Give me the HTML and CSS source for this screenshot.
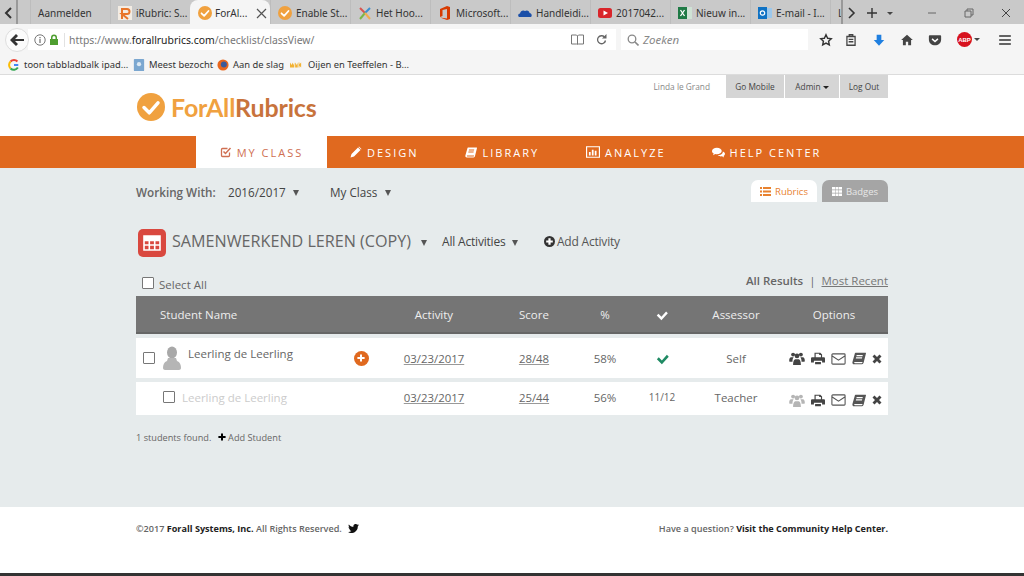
FILE: index.html
```html
<!DOCTYPE html>
<html lang="en">
<head>
  <meta charset="UTF-8" />
  <title>ForAllRubrics - Class View</title>
  <link rel="stylesheet" href="styles.css">
</head>
<body>
  <svg class="defs" width="0" height="0" aria-hidden="true">
    <symbol id="i-check" viewBox="0 0 24 24"><path d="M3 13l3-3 5 5L19 6l3 3-11 12z"/></symbol>
    <symbol id="i-people" viewBox="0 0 24 20"><circle cx="6" cy="4" r="3"/><circle cx="18" cy="4" r="3"/><circle cx="12" cy="6" r="3.6"/><path d="M0 13c0-3 1-5 3-5h4c-1 1-2 3-2 7H1c-.6 0-1-1-1-2zM24 13c0-3-1-5-3-5h-4c1 1 2 3 2 7h4c.6 0 1-1 1-2zM6 20c0-5 1-9 4-9h4c3 0 4 4 4 9z"/></symbol>
    <symbol id="i-print" viewBox="0 0 24 22"><path d="M6 1h10l3 3v5h-2V5h-3V3H8v6H6zM2 9h20c1 0 2 1 2 2v7h-5v-3H5v3H0v-7c0-1 1-2 2-2zM7 17h10v4H7z"/></symbol>
    <symbol id="i-mail" viewBox="0 0 24 20"><path fill="none" stroke="currentColor" stroke-width="1.8" d="M2.5 1.5h19a1.500 1.500 0 0 1 1.500 1.500v14a1.500 1.500 0 0 1-1.500 1.500h-19A1.500 1.500 0 0 1 1 17V3a1.500 1.500 0 0 1 1.500-1.500zM1.500 5l10.500 7 10.500-7"/></symbol>
    <symbol id="i-book" viewBox="0 0 24 22"><path d="M6 1h17c1 0 1 1 1 1l-4 16c-.3 1-1 3-3 3H4c-3 0-4-2-3-5L5 2c0-.5.500-1 1-1zM8 5l-.5 2H18l.5-2zM7 9l-.5 2H17l.5-2zM4 17c-.5 1 0 2 1 2h12c.5 0 1-.5 1-2z"/></symbol>
    <symbol id="i-close" viewBox="0 0 20 20"><path d="M5 1l5 5 5-5 4 4-5 5 5 5-4 4-5-5-5 5-4-4 5-5-5-5z"/></symbol>
    <symbol id="i-plus" viewBox="0 0 20 20"><path d="M7.500 1h5v6.500H19v5h-6.500V19h-5v-6.500H1v-5h6.500z"/></symbol>
    <symbol id="i-logo-check" viewBox="0 0 24 24"><path fill="none" stroke="#fff" stroke-width="3" stroke-linecap="round" stroke-linejoin="round" d="M6 12.500l4.500 4.500L18 8.500"/></symbol>
  </svg>

  <!-- browser chrome -->
  <div class="tabstrip">
    <span class="strip-arrow">
      <svg width="9" height="12" viewBox="0 0 9 12"><path fill="none" stroke="#333" stroke-width="2" d="M7 1L2 6l5 5"/></svg>
    </span>
    <span class="strip-stub"></span>
    <div class="tab">Aanmelden</div>
    <div class="tab">
      <svg class="favicon" viewBox="0 0 14 14"><rect width="14" height="14" fill="#f3ece3"/><path fill="none" stroke="#e8752a" stroke-width="2" d="M4 13V3h5a2.500 2.500 0 0 1 0 5H4l6 5"/></svg>
      <span>iRubric: S...</span>
    </div>
    <div class="tab tab-active">
      <svg class="favicon" viewBox="0 0 24 24"><circle cx="12" cy="12" r="12" fill="#f0a13f"/><use href="#i-logo-check"/></svg>
      <span>ForAl...</span>
      <svg class="tab-x" width="11" height="11" viewBox="0 0 11 11"><path fill="none" stroke="#555" stroke-width="1.200" d="M1 1l9 9M10 1l-9 9"/></svg>
    </div>
    <div class="tab">
      <svg class="favicon" viewBox="0 0 24 24"><circle cx="12" cy="12" r="12" fill="#f0a13f"/><use href="#i-logo-check"/></svg>
      <span>Enable St...</span>
    </div>
    <div class="tab">
      <svg class="favicon" viewBox="0 0 14 14"><path fill="none" stroke="#d9534f" stroke-width="2" d="M2 2l5 5"/><path fill="none" stroke="#3b8fd0" stroke-width="2" d="M12 2L7 7"/><path fill="none" stroke="#7ab648" stroke-width="2" d="M7 7l-5 6"/><path fill="none" stroke="#f0ad4e" stroke-width="2" d="M7 7l5 6"/></svg>
      <span>Het Hoo...</span>
    </div>
    <div class="tab">
      <svg class="favicon" viewBox="0 0 14 14"><path fill="#d83b01" d="M2 3l7-3 3 1v12l-3 1-7-2.500 7 1V3L4.500 4v6L2 11z"/></svg>
      <span>Microsoft...</span>
    </div>
    <div class="tab">
      <svg class="favicon" viewBox="0 0 14 14"><path fill="#1b4fa8" d="M1 11c-1.500-1-.8-3.500 1-3.500C2.500 5 5 3.500 7 5c2-1.500 4.500 0 4.500 2 2 0 3 3 1.500 4z"/></svg>
      <span>Handleidi...</span>
    </div>
    <div class="tab">
      <svg class="favicon" viewBox="0 0 14 14"><rect y="2" width="14" height="10" rx="2.500" fill="#d9252a"/><path fill="#fff" d="M5.500 4.500v5L10 7z"/></svg>
      <span>2017042...</span>
    </div>
    <div class="tab">
      <svg class="favicon" viewBox="0 0 14 14"><rect x="3" y="1" width="11" height="12" fill="#cfe3d5"/><rect y="1" width="9" height="12" fill="#1f7a45"/><path stroke="#fff" stroke-width="1.300" d="M2.500 4l4 6M6.500 4l-4 6"/></svg>
      <span>Nieuw in...</span>
    </div>
    <div class="tab">
      <svg class="favicon" viewBox="0 0 14 14"><rect x="4" y="2" width="10" height="10" fill="#9cc8ec"/><rect y="1" width="9" height="12" fill="#0f72c4"/><circle cx="4.500" cy="7" r="2.200" fill="none" stroke="#fff" stroke-width="1.200"/></svg>
      <span>E-mail - I...</span>
    </div>
    <div class="tab tab-cut">L</div>
    <div class="strip-controls">
      <svg class="strip-next" width="9" height="12" viewBox="0 0 9 12"><path fill="none" stroke="#333" stroke-width="1.600" d="M2 1l5 5-5 5"/></svg>
      <svg class="strip-new" width="12" height="12" viewBox="0 0 12 12"><path stroke="#333" stroke-width="1.400" d="M6 1v10M1 6h10"/></svg>
      <span class="mini-caret"></span>
    </div>
    <div class="win-controls">
      <svg width="10" height="10" viewBox="0 0 10 10"><path stroke="#666" d="M1 5h8"/></svg>
      <svg width="10" height="10" viewBox="0 0 10 10"><path fill="none" stroke="#666" d="M1 3h6v6H1zM3 3V1h6v6H7"/></svg>
      <svg width="10" height="10" viewBox="0 0 10 10"><path stroke="#444" d="M1 1l8 8M9 1L1 9"/></svg>
    </div>
  </div>

  <div class="toolbar">
    <span class="back-btn">
      <svg width="14" height="12" viewBox="0 0 14 12"><path fill="#333" d="M6 0l2 2-3 3h9v2H5l3 3-2 2-6-6z"/></svg>
    </span>
    <div class="urlbar">
      <svg class="url-info" width="12" height="12" viewBox="0 0 12 12"><circle cx="6" cy="6" r="5.200" fill="none" stroke="#777"/><path stroke="#777" stroke-width="1.300" d="M6 5v4M6 3v1.200"/></svg>
      <svg class="url-lock" width="10" height="11" viewBox="0 0 10 11"><path fill="#4f9e30" d="M1 5h1V3.500a3 3 0 0 1 6 0V5h1v6H1zM3.500 5h3V3.500a1.500 1.500 0 0 0-3 0z"/></svg>
      <span class="url-text">https://www.<b>forallrubrics.com</b>/checklist/classView/</span>
      <svg class="url-reader" width="13" height="11" viewBox="0 0 13 11"><path fill="none" stroke="#777" d="M.5 1h5l1 1 1-1h5v9h-5l-1 .5-1-.5h-5zM6.500 2v8"/></svg>
      <svg class="url-reload" width="11" height="11" viewBox="0 0 11 11"><path fill="none" stroke="#666" stroke-width="1.300" d="M9.500 6.500A4 4 0 1 1 8.500 3"/><path fill="#666" d="M10.500 0v4.500H6z"/></svg>
    </div>
    <div class="searchbar">
      <svg width="12" height="12" viewBox="0 0 12 12"><circle cx="5" cy="5" r="3.800" fill="none" stroke="#888" stroke-width="1.300"/><path stroke="#888" stroke-width="1.600" d="M8 8l3.500 3.500"/></svg>
      <span>Zoeken</span>
    </div>
    <div class="tools">
      <svg class="tool tool-star" viewBox="0 0 24 24"><path fill="none" stroke="#333" stroke-width="2.400" d="M12 3l2.800 6 6.200.7-4.600 4.300 1.300 6.500L12 17.200l-5.700 3.300 1.300-6.500L3 9.700 9.200 9z"/></svg>
      <svg class="tool" viewBox="0 0 24 24"><path fill="none" stroke="#444" stroke-width="2.200" d="M5 6h14v15H5zM9 6V3h6v3M8 11h8M8 15h8"/></svg>
      <svg class="tool" viewBox="0 0 24 24"><path fill="#1f7fe0" d="M8 3h8v9h5l-9 10-9-10h5z"/></svg>
      <svg class="tool" viewBox="0 0 24 24"><path fill="#444" d="M12 3l10 9h-3v9h-5v-6h-4v6H5v-9H2z"/></svg>
      <svg class="tool tool-pocket" viewBox="0 0 24 24"><path fill="#444" d="M3 4h18a1.500 1.500 0 0 1 1.500 1.500V11c0 6-5 10-10.500 10S1.500 17 1.500 11V5.500A1.500 1.500 0 0 1 3 4z"/><path fill="none" stroke="#fff" stroke-width="2.600" d="M7 10l5 4.500 5-4.500"/></svg>
      <span class="abp">ABP</span>
      <span class="mini-caret"></span>
      <svg class="tool tool-menu" viewBox="0 0 24 24"><path stroke="#333" stroke-width="2.600" d="M2 5h20M2 12h20M2 19h20"/></svg>
    </div>
  </div>

  <div class="bookmarks">
    <span class="bookmark bm-toon">
      <svg class="favicon" viewBox="0 0 14 14"><path fill="none" stroke="#4285f4" stroke-width="2.400" d="M12 7H7"/><path fill="none" stroke="#ea4335" stroke-width="2.400" d="M11 3a5.500 5.500 0 0 0-8 0"/><path fill="none" stroke="#fbbc05" stroke-width="2.400" d="M3 3a5.500 5.500 0 0 0 0 8"/><path fill="none" stroke="#34a853" stroke-width="2.400" d="M3 11a5.500 5.500 0 0 0 8.500-1"/></svg>
      toon tabbladbalk ipad...
    </span>
    <span class="bookmark bm-meest">
      <svg class="favicon" viewBox="0 0 14 14"><rect x="1" y="0" width="12" height="14" rx="1" fill="#7ba7d0"/><circle cx="7" cy="6" r="2.500" fill="#dbe8f3"/></svg>
      Meest bezocht
    </span>
    <span class="bookmark bm-aan">
      <svg class="favicon" viewBox="0 0 14 14"><circle cx="7" cy="7" r="6.500" fill="#e8671e"/><circle cx="8" cy="6.500" r="3.500" fill="#3a5a9a"/></svg>
      Aan de slag
    </span>
    <span class="bookmark bm-oijen">
      <svg class="favicon" viewBox="0 0 14 14"><path fill="#f2b233" d="M0 10V4l2 3 1-3 1 3 1-3v6zM6 10V4l2 3 1-3v6zM10 10V4h1v2l2-2v6l-2-2v2z"/></svg>
      Oijen en Teeffelen - B...
    </span>
  </div>

  <!-- page -->
  <header class="site-header">
    <a class="logo">
      <svg width="28" height="28" viewBox="0 0 24 24"><circle cx="12" cy="12" r="12" fill="#f0a13f"/><use href="#i-logo-check"/></svg>
      <span class="logo-text"><span class="logo-for">ForAll</span><span class="logo-rub">Rubrics</span></span>
    </a>
    <div class="user-menu">
      <span class="user-name">Linda le Grand</span>
      <a class="user-btn btn-mobile">Go Mobile</a>
      <a class="user-btn btn-admin">Admin <span class="mini-caret dark"></span></a>
      <a class="user-btn btn-logout">Log Out</a>
    </div>
  </header>

  <nav class="main-nav">
    <a class="nav-item active">
      <svg viewBox="0 0 24 24" width="12" height="12"><path fill="none" stroke="currentColor" stroke-width="2.600" d="M19 13v6a2 2 0 0 1-2 2H5a2 2 0 0 1-2-2V7a2 2 0 0 1 2-2h10"/><path fill="none" stroke="currentColor" stroke-width="3" d="M7 11l4 4L21 4"/></svg>
      MY CLASS
    </a>
    <a class="nav-item nav-design">
      <svg viewBox="0 0 24 24" width="12" height="12"><path fill="#fff" d="M1 23l2-7L16 3l5 5L8 21zM18 1l5 5-1 1-5-5z"/></svg>
      DESIGN
    </a>
    <a class="nav-item nav-library">
      <svg viewBox="0 0 24 22" width="12" height="11"><use href="#i-book" fill="#fff"/></svg>
      LIBRARY
    </a>
    <a class="nav-item nav-analyze">
      <svg viewBox="0 0 24 20" width="14" height="12"><path fill="none" stroke="#fff" stroke-width="2" d="M1 1h22v18H1z"/><path fill="#fff" d="M5 10h3v6H5zM10 6h3v10h-3zM15 8h3v8h-3z"/></svg>
      ANALYZE
    </a>
    <a class="nav-item nav-help">
      <svg viewBox="0 0 24 20" width="13" height="11"><path fill="#fff" d="M9 1c5 0 9 2.600 9 6s-4 6-9 6c-1 0-2 0-3-.3L2 15l1-3.500C1 10.500 0 9 0 7c0-3.400 4-6 9-6zM20 8c2.500 1 4 2.500 4 4.500 0 1.500-1 3-2.500 3.800L22 19l-3.500-2c-3 .6-6-.2-8-2 5 0 10-3 9.500-7z"/></svg>
      HELP CENTER
    </a>
  </nav>

  <main class="content">
    <div class="filter-row">
      <span class="filter-label">Working With:</span>
      <span class="filter-value fv-year">2016/2017 <i class="caret"></i></span>
      <span class="filter-value">My Class <i class="caret"></i></span>
      <div class="view-tabs">
        <a class="view-tab current">
          <svg width="11" height="9" viewBox="0 0 11 9"><path fill="#e8822f" d="M0 0h2v2H0zM3 0h8v2H3zM0 3.500h2v2H0zM3 3.500h8v2H3zM0 7h2v2H0zM3 7h8v2H3z"/></svg>
          Rubrics
        </a>
        <a class="view-tab">
          <svg width="10" height="9" viewBox="0 0 10 9"><path fill="#fff" d="M0 0h3v2.500H0zM3.500 0h3v2.500h-3zM7 0h3v2.500H7zM0 3.200h3v2.500H0zM3.500 3.200h3v2.500h-3zM7 3.200h3v2.500H7zM0 6.400h3V9H0zM3.500 6.400h3V9h-3zM7 6.400h3V9H7z"/></svg>
          Badges
        </a>
      </div>
    </div>

    <div class="title-row">
      <span class="class-icon">
        <svg width="18" height="16" viewBox="0 0 18 16"><path fill="none" stroke="#fff" stroke-width="1.600" d="M1 1h16v14H1zM1 5.500h16M1 10h16M6.300 1v14M11.700 1v14"/><path fill="#fff" d="M1 1h16v4H1z"/></svg>
      </span>
      <h1 class="class-title">SAMENWERKEND LEREN (COPY)</h1>
      <i class="caret title-caret"></i>
      <span class="activity-filter">All Activities <i class="caret"></i></span>
      <a class="add-activity">
        <svg width="11" height="11" viewBox="0 0 20 20"><circle cx="10" cy="10" r="10" fill="#333"/><path stroke="#fff" stroke-width="4" d="M10 4v12M4 10h12"/></svg>
        Add Activity
      </a>
    </div>

    <div class="select-row">
      <label class="select-all"><span class="checkbox big"></span> Select All</label>
      <div class="results-links"><b>All Results</b><span class="pipe">|</span><a>Most Recent</a></div>
    </div>

    <div class="table">
      <div class="row head">
        <div class="cell-name">Student Name</div>
        <div>Activity</div>
        <div>Score</div>
        <div>%</div>
        <div><svg width="14" height="14"><use href="#i-check" fill="#fff"/></svg></div>
        <div>Assessor</div>
        <div>Options</div>
      </div>

      <div class="row student">
        <div class="cell-name">
          <span class="checkbox"></span>
          <svg class="avatar" width="18" height="24" viewBox="0 0 18 24"><ellipse cx="9" cy="6.500" rx="5" ry="6" fill="#a8a8a8"/><path fill="#b5b5b5" d="M5 12h8l1 3c3 1 4 4 4 7 0 1-1 2-2 2H2c-1 0-2-1-2-2 0-3 1-6 4-7z"/></svg>
          <span class="student-name">Leerling de Leerling</span>
          <span class="add-circle"><svg width="8" height="8"><use href="#i-plus" fill="#fff"/></svg></span>
        </div>
        <div class="link">03/23/2017</div>
        <div class="link">28/48</div>
        <div>58%</div>
        <div class="green"><svg width="15" height="15"><use href="#i-check" fill="#1f8a63"/></svg></div>
        <div>Self</div>
        <div class="options">
          <svg class="o-people" width="16" height="13"><use href="#i-people"/></svg>
          <svg class="o-print" width="14" height="13"><use href="#i-print"/></svg>
          <svg class="o-mail" width="15" height="12"><use href="#i-mail"/></svg>
          <svg class="o-book" width="14" height="13"><use href="#i-book"/></svg>
          <svg class="o-close" width="10" height="10"><use href="#i-close"/></svg>
        </div>
      </div>

      <div class="row student second">
        <div class="cell-name">
          <span class="checkbox"></span>
          <span class="student-name faded">Leerling de Leerling</span>
        </div>
        <div class="link">03/23/2017</div>
        <div class="link">25/44</div>
        <div>56%</div>
        <div class="small">11/12</div>
        <div>Teacher</div>
        <div class="options">
          <svg class="o-people off" width="16" height="13"><use href="#i-people"/></svg>
          <svg class="o-print" width="14" height="13"><use href="#i-print"/></svg>
          <svg class="o-mail" width="15" height="12"><use href="#i-mail"/></svg>
          <svg class="o-book" width="14" height="13"><use href="#i-book"/></svg>
          <svg class="o-close" width="10" height="10"><use href="#i-close"/></svg>
        </div>
      </div>
    </div>

    <p class="found">1 students found. <a class="add-student"><svg width="8" height="8"><use href="#i-plus"/></svg> Add Student</a></p>
  </main>

  <footer class="site-footer">
    <div class="foot-left">
      ©2017 <b>Forall Systems, Inc.</b> All Rights Reserved.
      <svg class="twitter" width="11" height="9" viewBox="0 0 24 20"><path fill="#111" d="M24 2.400c-.9.400-1.800.7-2.800.8 1-.6 1.800-1.600 2.200-2.700-1 .6-2 1-3.100 1.200A4.900 4.900 0 0 0 11.900 6.200C7.800 6 4.200 4 1.700.9.400 3.100 1 6 3.200 7.500c-.8 0-1.600-.2-2.200-.6 0 2.400 1.700 4.400 3.900 4.900-.7.200-1.500.2-2.200.1.600 2 2.400 3.400 4.600 3.400A9.900 9.900 0 0 1 0 17.800 14 14 0 0 0 21.500 5.400c1-.7 1.800-1.600 2.500-3z"/></svg>
    </div>
    <div class="foot-right">Have a question? <b>Visit the Community Help Center.</b></div>
  </footer>
  <div class="taskbar"></div>
</body>
</html>
```

FILE: styles.css
```css
* {
  box-sizing: border-box;
}
html, body {
  height: 576px;
  overflow: hidden;
}
body {
  margin: 0;
  display: flex;
  flex-direction: column;
  background: #fff;
  font-family: "Open Sans", sans-serif;
  color: #555;
}
a {
  color: inherit;
  text-decoration: none;
}
.defs {
  position: absolute;
}
.favicon {
  width: 14px;
  height: 14px;
  flex: none;
}

/* Browser chrome */
.tabstrip {
  height: 24px;
  flex: none;
  display: flex;
  align-items: stretch;
  background: #c9c9c9;
  font-family: "Noto Sans", sans-serif;
  font-size: 10px;
  color: #333;
}
.strip-arrow {
  width: 16px;
  display: flex;
  align-items: center;
  justify-content: center;
  padding-top: 2px;
}
.strip-stub {
  width: 14px;
  border-left: 2px solid #999;
}
.tab {
  width: 80px;
  flex: none;
  display: flex;
  align-items: center;
  gap: 4px;
  padding: 2px 0 0 7px;
  border-left: 1px solid #bdbdbd;
  white-space: nowrap;
}
.tab-active {
  background: #f5f5f5;
  border-left: 0;
  border-radius: 8px 8px 0 0;
  padding-left: 8px;
  gap: 3px;
}
.tab-x {
  margin-left: 6px;
}
.tab-cut {
  width: 13px;
  padding-left: 7px;
  overflow: hidden;
  border-right: 2px solid #999;
}
.strip-controls {
  display: flex;
  align-items: center;
  padding: 2px 0 0 4px;
}
.strip-new {
  margin-left: 10px;
}
.strip-controls .mini-caret {
  margin-left: 9px;
}
.mini-caret {
  display: inline-block;
  width: 0;
  height: 0;
  border: 3px solid transparent;
  border-top: 3px solid #444;
  border-bottom: 0;
  vertical-align: middle;
}
.mini-caret.dark {
  border-top-color: #222;
}
.win-controls {
  margin-left: auto;
  width: 97px;
  padding: 1px 13px 0 0;
  display: flex;
  align-items: center;
  justify-content: space-between;
}
.toolbar {
  height: 29px;
  flex: none;
  display: flex;
  align-items: center;
  background: #f5f5f5;
  padding: 2px 0 0 5px;
}
.back-btn {
  width: 24px;
  height: 24px;
  border-radius: 50%;
  background: #fbfbfb;
  border: 1px solid #dedede;
  display: flex;
  align-items: center;
  justify-content: center;
  flex: none;
  position: relative;
  z-index: 1;
}
.urlbar {
  width: 588px;
  margin-left: -1px;
  height: 21px;
  background: #fff;
  display: flex;
  align-items: center;
  padding-left: 6px;
  flex: none;
}
.url-lock {
  margin-left: 3px;
}
.url-text {
  margin-left: 5px;
  font-family: "Noto Sans", sans-serif;
  font-size: 10.400px;
  color: #777;
  padding-left: 4px;
  border-left: 1px solid #e2e2e2;
}
.url-text b {
  font-weight: 400;
  color: #222;
}
.url-reader {
  margin-left: auto;
}
.url-reload {
  margin: 0 9px 0 12px;
}
.searchbar {
  width: 187px;
  height: 21px;
  margin-left: 5px;
  background: #fff;
  display: flex;
  align-items: center;
  gap: 4px;
  padding-left: 6px;
  font-family: "Noto Sans", sans-serif;
  font-size: 11.500px;
  font-style: italic;
  color: #888;
  flex: none;
}
.tools {
  display: flex;
  align-items: center;
  margin-left: 11px;
}
.tool {
  width: 14px;
  height: 14px;
  margin-right: 14px;
  flex: none;
}
.tool-star {
  margin-right: 11px;
}
.tool-pocket {
  margin-right: 15px;
}
.abp {
  width: 15px;
  height: 15px;
  border-radius: 50%;
  background: #d7121e;
  color: #fff;
  font-family: "Liberation Sans", sans-serif;
  font-size: 6px;
  font-weight: 700;
  display: flex;
  align-items: center;
  justify-content: center;
  margin-right: 2px;
}
.tool-menu {
  margin: 0 0 0 18px;
}
.bookmarks {
  height: 22px;
  flex: none;
  display: flex;
  align-items: center;
  background: #f5f5f5;
  border-bottom: 1px solid #dcdcdc;
  padding: 2px 0 0 8px;
  font-family: "Noto Sans", sans-serif;
  font-size: 9.400px;
  color: #333;
}
.bookmark {
  display: flex;
  align-items: center;
  gap: 4px;
  white-space: nowrap;
}
.bookmark .favicon {
  width: 12px;
  height: 12px;
}
.bm-toon {
  width: 125px;
}
.bm-meest {
  width: 84px;
}
.bm-aan {
  width: 72px;
}
.bm-oijen {
  gap: 5px;
}
.bm-oijen .favicon {
  width: 14px;
}

/* Site header */
.site-header {
  height: 61px;
  flex: none;
  display: flex;
  justify-content: space-between;
  padding: 0 136px 0 137px;
}
.logo {
  display: flex;
  align-items: center;
  gap: 6px;
  padding-top: 2px;
  margin-top: 2px;
  height: 58px;
}
.logo-text {
  font-family: "Lato", sans-serif;
  font-weight: 700;
  font-size: 25px;
  letter-spacing: -.15px;
}
.logo-for {
  color: #f0a13f;
}
.logo-rub {
  color: #c8733c;
}
.user-menu {
  display: flex;
  align-items: flex-start;
  font-size: 8.300px;
}
.user-name {
  margin-right: 16px;
  line-height: 23px;
  color: #888;
}
.user-btn {
  height: 23px;
  line-height: 23px;
  background: #d5d5d5;
  text-align: center;
  color: #444;
  margin-left: 1px;
}
.btn-mobile {
  width: 58px;
  margin-left: 0;
}
.btn-admin {
  width: 54px;
}
.btn-logout {
  width: 48px;
}

/* Main nav */
.main-nav {
  height: 32px;
  flex: none;
  display: flex;
  background: #e0691f;
  padding-left: 196px;
  font-size: 11px;
  letter-spacing: 2px;
  color: #fff;
}
.nav-item {
  display: flex;
  align-items: center;
  gap: 5px;
  white-space: nowrap;
}
.nav-item.active {
  width: 131px;
  justify-content: center;
  background: #fff;
  color: #cf6f52;
}
.nav-design {
  margin-left: 23px;
}
.nav-library {
  margin-left: 47px;
}
.nav-analyze {
  margin-left: 47px;
}
.nav-help {
  margin-left: 46px;
}

/* Content */
.content {
  height: 339px;
  flex: none;
  background: #e6ebec;
  padding: 12px 136px 0;
}
.filter-row {
  height: 22px;
  display: flex;
  align-items: center;
  font-size: 11.700px;
  color: #444;
}
.filter-label {
  font-weight: 600;
  color: #666;
  width: 92px;
  padding-top: 1px;
}
.filter-value {
  white-space: nowrap;
  padding-top: 1px;
}
.fv-year {
  width: 102px;
}
.caret {
  display: inline-block;
  width: 0;
  height: 0;
  border: 3.500px solid transparent;
  border-top: 6px solid #555;
  border-bottom: 0;
  margin-left: 4.500px;
  vertical-align: middle;
}
.view-tabs {
  margin-left: auto;
  display: flex;
  gap: 5px;
  font-size: 9.500px;
  align-self: stretch;
}
.view-tab {
  width: 66px;
  border-radius: 7px 7px 0 0;
  background: #a5a5a5;
  color: #e8e8e8;
  display: flex;
  align-items: center;
  justify-content: center;
  gap: 4px;
}
.view-tab.current {
  background: #fff;
  color: #e8822f;
}
.title-row {
  margin-top: 27px;
  height: 28px;
  display: flex;
  align-items: center;
  padding-left: 2px;
  color: #555;
}
.class-icon {
  width: 28px;
  height: 28px;
  border-radius: 5px;
  background: #d9483f;
  display: flex;
  align-items: center;
  justify-content: center;
  flex: none;
}
.class-title {
  margin: 0 0 0 6px;
  padding-bottom: 4px;
  font-size: 16.150px;
  font-weight: 400;
  color: #666;
  white-space: nowrap;
}
.title-caret {
  margin-left: 10px;
}
.activity-filter {
  margin-left: 15px;
  padding-bottom: 3px;
  font-size: 12px;
  letter-spacing: -.2px;
  color: #444;
}
.activity-filter .caret {
  margin-left: 3.500px;
}
.add-activity {
  margin-left: 26px;
  padding-bottom: 3px;
  display: flex;
  align-items: center;
  gap: 2px;
  font-size: 12px;
  letter-spacing: -.2px;
  color: #555;
}
.select-row {
  margin-top: 15px;
  height: 24px;
  display: flex;
  align-items: center;
  justify-content: space-between;
  font-size: 11.500px;
  color: #666;
}
.select-all {
  display: flex;
  align-items: center;
  gap: 5px;
  padding: 2px 0 0 6px;
  line-height: 16px;
}
.select-all .checkbox {
  margin-top: -5px;
}
.checkbox {
  width: 12px;
  height: 12px;
  background: #fff;
  border: 1px solid #777;
  border-radius: 1px;
  display: inline-block;
  flex: none;
}
.results-links {
  margin-top: -8px;
}
.results-links b {
  font-weight: 600;
}
.results-links a {
  text-decoration: underline;
  color: #777;
}
.pipe {
  margin: 0 6px;
}

/* Table */
.row {
  display: grid;
  grid-template-columns: 242px 112px 88px 54px 60px 88px 108px;
  align-items: center;
  text-align: center;
  font-size: 11.500px;
  color: #666;
}
.row.head {
  height: 38px;
  background: #757575;
  border-bottom: 2px solid #666;
  padding-top: 1px;
  color: #eee;
}
.row.student {
  height: 40px;
  margin-top: 4px;
  background: #fff;
}
.row.second {
  height: 33px;
  padding-bottom: 3px;
}
.row svg {
  vertical-align: middle;
}
.cell-name {
  text-align: left;
  display: flex;
  align-items: center;
}
.head .cell-name {
  padding-left: 24px;
}
.student .cell-name {
  padding-left: 7px;
}
.second .cell-name {
  padding-left: 27px;
}
.avatar {
  margin-left: 8px;
}
.student-name {
  margin-left: 7px;
  padding-bottom: 10px;
}
.second .student-name {
  padding: 1px 0 0;
}
.faded {
  color: #ccc;
}
.add-circle {
  width: 15px;
  height: 15px;
  border-radius: 50%;
  background: #e0691f;
  display: flex;
  align-items: center;
  justify-content: center;
  margin-left: 61px;
}
.link {
  text-decoration: underline;
  text-decoration-color: #999;
  font-size: 11.400px;
}
.small {
  font-size: 10px;
}
.options {
  display: flex;
  align-items: center;
  justify-content: center;
  gap: 6px;
  color: #444;
  fill: #444;
  padding: 1px 0 0 2px;
}
.second .options {
  padding-top: 6px;
}
.o-mail {
  color: #555;
}
.o-book {
  fill: #555;
}
.off {
  fill: #b5b5b5;
}
.found {
  margin: 16px 0 0;
  font-size: 9.200px;
  color: #666;
}
.add-student {
  margin-left: 4px;
}

/* Footer */
.site-footer {
  flex: 1;
  display: flex;
  justify-content: space-between;
  padding: 15px 136px 0;
  font-size: 9.100px;
  color: #666;
  font-weight: 600;
}
.site-footer b {
  color: #222;
  font-weight: 700;
}
.twitter {
  margin-left: 4px;
  vertical-align: -1px;
}
.taskbar {
  height: 3px;
  flex: none;
  background: #333;
}
```
